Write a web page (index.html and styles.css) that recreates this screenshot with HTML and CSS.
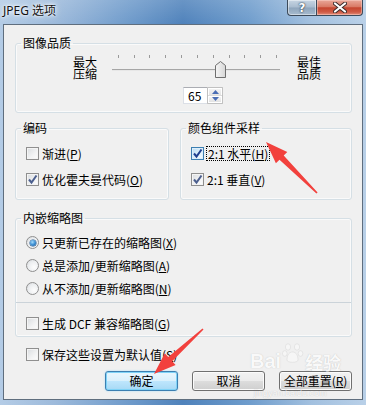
FILE: index.html
```html
<!DOCTYPE html>
<html lang="zh">
<head>
<meta charset="utf-8">
<title>JPEG 选项</title>
<link rel="stylesheet" href="styles.css">
</head>
<body>
<div class="window">
  <div class="titlebar">
    <div class="title">JPEG 选项</div>
    <div class="caption-btns">
      <div class="cap-btn help">?</div>
      <div class="cap-btn close">
        <svg width="14" height="11" viewBox="0 0 14 11"><path d="M2 1.5 L12 9.5 M12 1.5 L2 9.5" stroke="#3a2a2a" stroke-width="4" stroke-linecap="round"/><path d="M2 1.5 L12 9.5 M12 1.5 L2 9.5" stroke="#fff" stroke-width="2.2" stroke-linecap="round"/></svg>
      </div>
    </div>
  </div>

  <div class="client">
    <fieldset class="group g-quality">
      <legend>图像品质</legend>
      <div class="slider-row">
        <div class="lbl2"><div>最大</div><div>压缩</div></div>
        <svg class="slider" width="170" height="30" viewBox="0 0 170 30">
          <g stroke="#9a9a9a" stroke-width="1">
            <line x1="7.5" y1="2" x2="7.5" y2="5"/>
            <line x1="23.5" y1="2" x2="23.5" y2="5"/>
            <line x1="38.5" y1="2" x2="38.5" y2="5"/>
            <line x1="54.5" y1="2" x2="54.5" y2="5"/>
            <line x1="70.5" y1="2" x2="70.5" y2="5"/>
            <line x1="86.5" y1="2" x2="86.5" y2="5"/>
            <line x1="102.5" y1="2" x2="102.5" y2="5"/>
            <line x1="118.5" y1="2" x2="118.5" y2="5"/>
            <line x1="133.5" y1="2" x2="133.5" y2="5"/>
            <line x1="149.5" y1="2" x2="149.5" y2="5"/>
            <line x1="165.5" y1="2" x2="165.5" y2="5"/>
          </g>
          <line x1="1" y1="16.5" x2="169" y2="16.5" stroke="#a6a6a6"/>
          <line x1="1" y1="17.5" x2="169" y2="17.5" stroke="#e7e7e7"/>
          <defs>
            <linearGradient id="th" x1="0" y1="0" x2="1" y2="0">
              <stop offset="0" stop-color="#f6f6f6"/>
              <stop offset="1" stop-color="#d6d6d6"/>
            </linearGradient>
          </defs>
          <path d="M104.5 24.5 V12.5 L109.5 8.5 L114.5 12.5 V24.5 Z" fill="url(#th)" stroke="#6f6f6f" stroke-linejoin="round"/>
        </svg>
        <div class="lbl2 right"><div>最佳</div><div>品质</div></div>
      </div>
      <div class="spin">
        <div class="spin-input">65</div>
        <div class="spin-btns">
          <div class="spin-b"><svg width="7" height="4" viewBox="0 0 7 4"><path d="M0 4 L3.5 0 L7 4 Z" fill="#4a6db4"/></svg></div>
          <div class="spin-b"><svg width="7" height="4" viewBox="0 0 7 4"><path d="M0 0 L3.5 4 L7 0 Z" fill="#4a6db4"/></svg></div>
        </div>
      </div>
    </fieldset>

    <div class="row2">
      <fieldset class="group g-enc">
        <legend>编码</legend>
        <div class="checks">
          <div class="crow"><span class="cb"></span><span>渐进(<u>P</u>)</span></div>
          <div class="crow"><span class="cb"><svg class="mark" width="11" height="11" viewBox="0 0 11 11"><path d="M2 5.5 L4.5 8.5 L9.5 1.5" fill="none" stroke="#4c5f8e" stroke-width="2"/></svg></span><span>优化霍夫曼代码(<u>O</u>)</span></div>
        </div>
      </fieldset>
      <fieldset class="group g-color">
        <legend>颜色组件采样</legend>
        <div class="checks">
          <div class="crow"><span class="cb hot"><svg class="mark" width="11" height="11" viewBox="0 0 11 11"><path d="M2 5.5 L4.5 8.5 L9.5 1.5" fill="none" stroke="#1f3f8f" stroke-width="2"/></svg></span><span class="focus">2:1 水平(<u>H</u>)</span></div>
          <div class="crow"><span class="cb"><svg class="mark" width="11" height="11" viewBox="0 0 11 11"><path d="M2 5.5 L4.5 8.5 L9.5 1.5" fill="none" stroke="#4c5f8e" stroke-width="2"/></svg></span><span>2:1 垂直(<u>V</u>)</span></div>
        </div>
      </fieldset>
    </div>

    <fieldset class="group g-thumb">
      <legend>内嵌缩略图</legend>
      <div class="radios">
        <div class="crow"><span class="rb on"></span><span>只更新已存在的缩略图(<u>X</u>)</span></div>
        <div class="crow"><span class="rb"></span><span>总是添加/更新缩略图(<u>A</u>)</span></div>
        <div class="crow"><span class="rb"></span><span>从不添加/更新缩略图(<u>N</u>)</span></div>
      </div>
      <div class="dcf">
        <div class="crow"><span class="cb"></span><span>生成 DCF 兼容缩略图(<u>G</u>)</span></div>
      </div>
    </fieldset>

    <div class="crow save"><span class="cb"></span><span>保存这些设置为默认值(<u>S</u>)</span></div>

    <div class="buttons">
      <div class="btn default">确定</div>
      <div class="btn">取消</div>
      <div class="btn">全部重置(<u>R</u>)</div>
    </div>
  </div>

  <div class="watermark">
    <div class="wm-top"><span class="wm-bai">Bai</span><svg class="wm-paw" width="22" height="22" viewBox="0 0 22 22"><g fill="#fff" fill-opacity="0.75" stroke="#bbb" stroke-opacity="0.5" stroke-width="0.8"><ellipse cx="6" cy="5" rx="2.6" ry="3.2"/><ellipse cx="15" cy="5" rx="2.6" ry="3.2"/><ellipse cx="2.8" cy="11.5" rx="2.3" ry="2.8"/><ellipse cx="18.5" cy="11.5" rx="2.3" ry="2.8"/><path d="M5 18 C5 12 8 10 10.5 10 C13 10 16 12 16 18 C16 21 5 21 5 18 Z"/></g></svg><span class="wm-jy">经验</span></div>
    <div class="wm-url">jingyan.baidu.com</div>
  </div>

  <svg class="arrows" width="366" height="405" viewBox="0 0 366 405">
    <polygon points="266,142 275.9,163.3 279.5,159.7 316.4,193.6 317.6,192.4 283.7,155.5 287.3,151.9" fill="#f2413d"/>
    <polygon points="154,374 175.6,365 172.2,361.3 203.5,329.6 202.5,328.4 168.2,356.9 164.8,353.2" fill="#f2413d"/>
  </svg>
</div>
</body>
</html>
```

FILE: styles.css
```css
html, body {
  margin: 0;
  padding: 0;
}
body {
  width: 366px;
  height: 405px;
  overflow: hidden;
}
.window {
  position: relative;
  width: 366px;
  height: 405px;
  display: flex;
  flex-direction: column;
  box-sizing: border-box;
  background:
    linear-gradient(rgba(255,255,255,0.15), rgba(255,255,255,0) 24px),
    linear-gradient(to right, #b4cce6 0%, #9dbadb 15%, #6f9bcb 35%, #4f82bb 50%, #6e9ccc 68%, #a2c0df 85%, #b9d0e8 100%);
  font-family: "Noto Sans CJK SC", sans-serif;
  font-size: 12px;
  color: #000;
}
.titlebar {
  flex: none;
  height: 24px;
  display: flex;
  align-items: flex-start;
}
.title {
  padding: 3px 0 0 3px;
  line-height: 16px;
  font-family: "Noto Sans", "Noto Sans CJK SC", sans-serif;
  font-size: 12px;
  color: #111;
  text-shadow: 0 0 4px #fff, 0 0 7px #e6f0fa, 0 0 2px #fff;
}
.caption-btns {
  margin-left: auto;
  margin-right: 3px;
  display: flex;
}
.cap-btn {
  height: 16px;
  box-sizing: border-box;
  border: 1px solid #3c4a5a;
  border-top: none;
  display: flex;
  align-items: center;
  justify-content: center;
}
.help {
  width: 29px;
  border-right: none;
  border-radius: 0 0 0 4px;
  background: linear-gradient(#c7d5e3 0%, #a9bccf 48%, #8ea5bc 52%, #a7bbce 100%);
  box-shadow: inset 0 0 0 1px rgba(255,255,255,0.45);
  color: #fff;
  font-family: "DejaVu Sans", sans-serif;
  font-weight: bold;
  font-size: 12px;
  line-height: 14px;
  text-shadow: 0 0 2px #2a3a4a, 0 0 1px #2a3a4a;
}
.close {
  width: 47px;
  border-radius: 0 0 4px 0;
  background: linear-gradient(#e9a799 0%, #d97a66 45%, #c5452f 52%, #cf5b46 80%, #e18f7c 100%);
  box-shadow: inset 0 0 0 1px rgba(255,220,210,0.45);
}
.client {
  flex: 1;
  margin: 0 3px 5px 3px;
  border: 1px solid #5f6e7e;
  background: #f0f0f0;
  padding: 0 10px 0 11px;
  display: flex;
  flex-direction: column;
}
.group {
  margin: 0;
  padding: 0;
  border: 1px solid #d5dfe5;
  border-radius: 3px;
  box-shadow: inset 0 0 0 1px #fafafa;
  min-width: 0;
}
.group legend {
  margin-left: 5px;
  padding: 0 2px;
  line-height: 14px;
}
.g-quality {
  margin-top: 11px;
}
.slider-row {
  display: flex;
  align-items: center;
  margin: 3px 0 0 57px;
}
.lbl2 {
  width: 24px;
  display: flex;
  flex-direction: column;
  font-size: 12px;
  line-height: 12px;
}
.slider {
  margin-left: 14px;
  display: block;
}
.lbl2.right {
  margin-left: 16px;
}
.spin {
  display: flex;
  margin: 4px 0 8px 167px;
  height: 17px;
}
.spin-input {
  width: 24px;
  box-sizing: border-box;
  height: 17px;
  background: #fff;
  border: 1px solid #dbdfe6;
  border-top-color: #abadb3;
  border-right: none;
  padding-left: 4px;
  line-height: 15px;
}
.spin-btns {
  width: 16px;
  height: 17px;
  box-sizing: border-box;
  border: 1px solid #c9c9c9;
  display: flex;
  flex-direction: column;
  background: #fff;
}
.spin-b {
  flex: 1;
  display: flex;
  align-items: center;
  justify-content: center;
  background: linear-gradient(#f3f3f3, #e2e2e2);
  border: 1px solid #fff;
  box-shadow: 0 0 0 0.5px #b9b9b9;
}
.row2 {
  display: flex;
  gap: 11px;
  margin-top: 8px;
}
.g-enc {
  width: 154px;
  box-sizing: border-box;
}
.g-color {
  flex: 1;
}
.checks {
  display: flex;
  flex-direction: column;
  gap: 13px;
  padding: 12px 10px 13px;
}
.crow {
  display: flex;
  align-items: center;
  gap: 3px;
  height: 13px;
  line-height: 13px;
  white-space: nowrap;
}
.cb {
  flex: none;
  width: 13px;
  height: 13px;
  box-sizing: border-box;
  border: 1px solid #8f8f8f;
  background: linear-gradient(135deg, #d9dcdf 0%, #f2f3f4 60%, #fdfdfd 100%);
  box-shadow: inset 0 0 0 1px #f4f4f4;
  position: relative;
}
.cb.hot {
  border-color: #3c7fb1;
  background: linear-gradient(135deg, #b9dcf3 0%, #e6f4fc 70%, #f7fbfe 100%);
  box-shadow: inset 0 0 0 1px #deeefb;
}
.mark {
  display: block;
  position: absolute;
  left: 0;
  top: 0;
}
.focus {
  outline: 1px dotted #000;
  outline-offset: 0;
  padding: 0 1px;
  line-height: 13px;
}
.g-thumb {
  margin-top: 11px;
}
.radios {
  display: flex;
  flex-direction: column;
  gap: 10px;
  padding: 11px 10px 7px;
}
.rb {
  flex: none;
  width: 13px;
  height: 13px;
  box-sizing: border-box;
  border-radius: 50%;
  border: 1px solid #8f8f8f;
  background: radial-gradient(circle at 65% 65%, #fdfdfd 0%, #eceef0 55%, #d2d5d8 100%);
  display: flex;
  align-items: center;
  justify-content: center;
}
.rb.on::after {
  content: "";
  width: 6px;
  height: 6px;
  border-radius: 50%;
  background: radial-gradient(circle at 40% 35%, #a6dcfb 0%, #3d8fd3 50%, #185796 100%);
  box-shadow: 0 0 0 0.5px #1c4f85;
}
.dcf {
  border-top: 1px solid #cbd3d9;
  padding: 14px 10px 6px;
}
.save {
  margin: 11px 0 0 11px;
}
.buttons {
  display: flex;
  justify-content: flex-end;
  gap: 14px;
  margin-top: 10px;
}
.btn {
  width: 73px;
  height: 20px;
  box-sizing: border-box;
  border: 1px solid #707070;
  border-radius: 3px;
  background: linear-gradient(#f2f2f2 0%, #ebebeb 50%, #dddddd 51%, #cfcfcf 100%);
  box-shadow: inset 0 0 0 1px #fbfbfb;
  display: flex;
  align-items: center;
  justify-content: center;
  line-height: 14px;
}
.btn.default {
  border-color: #3c7fb1;
  background: linear-gradient(#eaf6fd 0%, #d9f0fc 50%, #bee6fd 51%, #a7d9f5 100%);
  box-shadow: inset 0 0 0 1px #7fd3f7, 0 0 2px #9fdcfb;
}
.watermark {
  position: absolute;
  left: 250px;
  top: 338px;
  color: #fff;
  opacity: 0.6;
  text-shadow: 0 0 1px rgba(120,120,120,0.7);
  pointer-events: none;
}
.wm-top {
  display: flex;
  align-items: flex-end;
  height: 34px;
}
.wm-bai {
  font-family: "Liberation Sans", sans-serif;
  font-weight: bold;
  font-size: 20px;
  line-height: 22px;
}
.wm-paw {
  margin: 0 1px 8px 1px;
}
.wm-jy {
  font-size: 18px;
  line-height: 20px;
  font-weight: bold;
}
.wm-url {
  font-family: "Liberation Sans", sans-serif;
  font-size: 9px;
  line-height: 10px;
  margin-left: 4px;
  margin-top: 16px;
}
.arrows {
  position: absolute;
  left: 0;
  top: 0;
  pointer-events: none;
}
```
